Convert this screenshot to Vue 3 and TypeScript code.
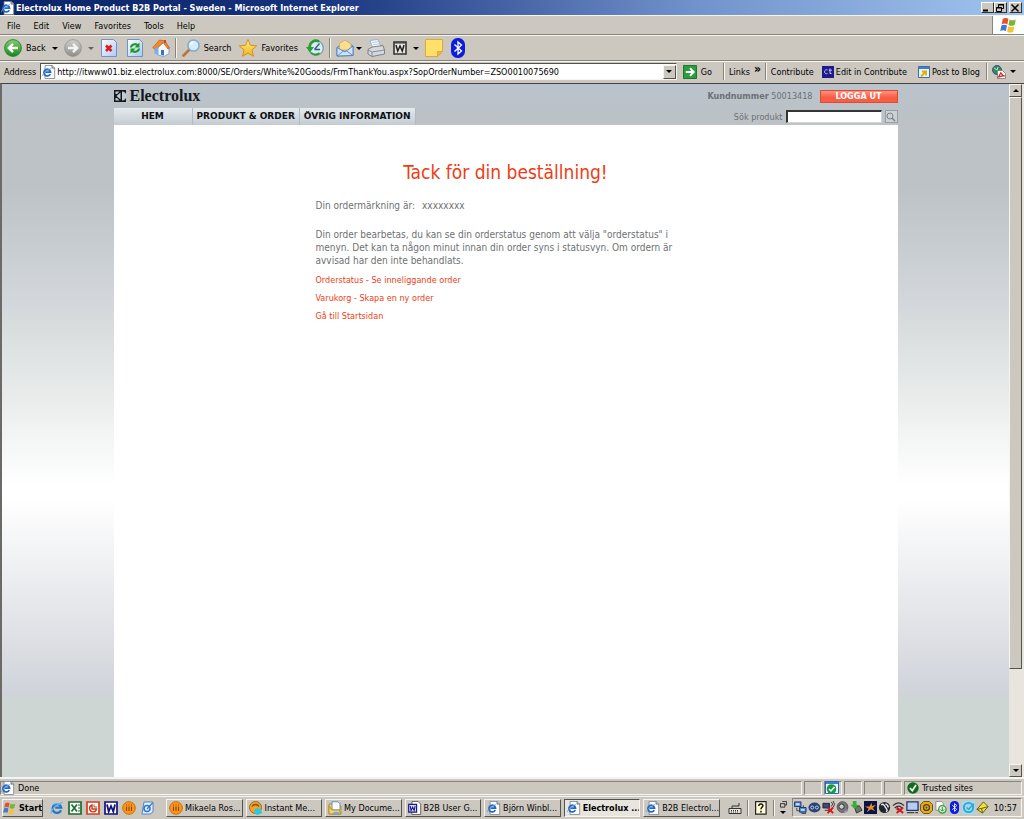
<script setup lang="ts">
import { ref } from 'vue'

interface TaskItem {
  icon: string
  label: string
  active?: boolean
}

const address = ref(
  'http://itwww01.biz.electrolux.com:8000/SE/Orders/White%20Goods/FrmThankYou.aspx?SopOrderNumber=ZSO0010075690',
)
const query = ref('')

const menus = ['File', 'Edit', 'View', 'Favorites', 'Tools', 'Help']

const nav = ['HEM', 'PRODUKT & ORDER', 'ÖVRIG INFORMATION']

const actions = [
  'Orderstatus - Se inneliggande order',
  'Varukorg - Skapa en ny order',
  'Gå till Startsidan',
]

const quickLaunch = ['ie', 'excel', 'powerpoint', 'word', 'orange', 'outlook']

const tasks: TaskItem[] = [
  { icon: 'orange', label: 'Mikaela Ros...' },
  { icon: 'messenger', label: 'Instant Me...' },
  { icon: 'folder', label: 'My Docume...' },
  { icon: 'worddoc', label: 'B2B User G...' },
  { icon: 'page', label: 'Björn Winbl...' },
  { icon: 'page', label: 'Electrolux ...', active: true },
  { icon: 'page', label: 'B2B Electrol...' },
]

const tray = [
  'network', 'cisco', 'offline', 'speaker', 'eject', 'star-dark', 'phone',
  'nowifi', 'monitor', 'lotus', 'sync', 'bluetooth', 'quicktime', 'tag',
]
</script>

<template>
  <div class="screen">
    <svg class="sprite" aria-hidden="true">
      <defs>
        <linearGradient id="g-green" x1="0" y1="0" x2="0" y2="1">
          <stop offset="0" stop-color="#7fd06c" /><stop offset="1" stop-color="#178a1c" />
        </linearGradient>
        <linearGradient id="g-grey" x1="0" y1="0" x2="0" y2="1">
          <stop offset="0" stop-color="#cfcfcd" /><stop offset="1" stop-color="#8d8d8b" />
        </linearGradient>
        <linearGradient id="g-sheet" x1="0" y1="0" x2="1" y2="1">
          <stop offset="0" stop-color="#ffffff" /><stop offset="1" stop-color="#a9c8f5" />
        </linearGradient>
        <linearGradient id="g-gold" x1="0" y1="0" x2="0" y2="1">
          <stop offset="0" stop-color="#fff07a" /><stop offset="1" stop-color="#f5b21c" />
        </linearGradient>
      </defs>
      <symbol id="i-ie" viewBox="0 0 16 16">
        <path d="M12.6 10.6a5 5 0 1 1 .3-3H6" fill="none" stroke="#1f78cc" stroke-width="2.6" />
        <path d="M1.5 14.5C0 12 6 4 14.500 1.500" fill="none" stroke="#63b5ee" stroke-width="1.300" />
        <path d="M4 4.600a5 5 0 0 1 7-.4" fill="none" stroke="#7cc4f5" stroke-width="1" />
      </symbol>
      <symbol id="i-page" viewBox="0 0 16 16">
        <path d="M3.500.5h8l3 3v12h-11z" fill="#fff" stroke="#7c8794" />
        <path d="M11.500.5v3h3" fill="#d5dde8" stroke="#55606d" />
        <path d="M9.400 10.300a3.800 3.800 0 1 1 .3-2.300H4" fill="none" stroke="#2267c9" stroke-width="2" />
        <path d="M.8 12.800C0 11 4 6 10.500 4" fill="none" stroke="#59a5ec" />
      </symbol>
      <symbol id="i-back" viewBox="0 0 18 18">
        <circle cx="9" cy="9" r="8.400" fill="url(#g-green)" stroke="#1c7a20" stroke-width=".8" />
        <path d="M14 9H5.500M9 4.800 4.800 9 9 13.200" fill="none" stroke="#fff" stroke-width="2.400" />
      </symbol>
      <symbol id="i-forward" viewBox="0 0 18 18">
        <circle cx="9" cy="9" r="8.400" fill="url(#g-grey)" stroke="#929290" stroke-width=".8" />
        <path d="M4 9h8.500M9 4.800 13.200 9 9 13.200" fill="none" stroke="#f4f4f2" stroke-width="2.400" />
      </symbol>
      <symbol id="i-stop" viewBox="0 0 18 18">
        <path d="M1.500.5h12l3 3v14h-15z" fill="url(#g-sheet)" stroke="#6d93c9" />
        <path d="M6 6.500l5.500 5.500M11.500 6.500 6 12" stroke="#e01c1c" stroke-width="2.600" />
      </symbol>
      <symbol id="i-refresh" viewBox="0 0 18 18">
        <path d="M1.500.5h12l3 3v14h-15z" fill="url(#g-sheet)" stroke="#6d93c9" />
        <path d="M5 8.500c.3-3 4.500-4.500 7-2M13 9.500c-.3 3-4.500 4.500-7 2" fill="none" stroke="#1d9a28" stroke-width="2.200" />
        <path d="M13.500 3.500v5h-5zM4.500 14.500v-5h5z" fill="#1d9a28" />
      </symbol>
      <symbol id="i-home" viewBox="0 0 18 18">
        <path d="M6 8v8l6 1.500 5-3V8l-5-5z" fill="#f4f8ff" stroke="#6f97cf" stroke-width=".8" />
        <path d="M.8 8.500 7.500 1 13 2l4.500 7-1.500 1-5-6.500L3.500 11z" fill="#f08a2a" stroke="#b95a10" stroke-width=".7" />
        <path d="M2.500 10v4.500L6 16V8z" fill="#7caee9" />
        <path d="M12 1h2v3h-2z" fill="#c8492b" />
        <path d="M9 11h3v5.500l-3-.7z" fill="#3f72bd" />
      </symbol>
      <symbol id="i-search" viewBox="0 0 18 18">
        <path d="M8 10 1.500 16.500" stroke="#b7773f" stroke-width="2.800" stroke-linecap="round" />
        <circle cx="11.500" cy="6.500" r="5.600" fill="#d5ecfd" stroke="#7fa8d4" stroke-width="1.500" />
        <path d="M8.500 6a3 3 0 0 1 3-2.700" fill="none" stroke="#fff" stroke-width="1.500" />
      </symbol>
      <symbol id="i-star" viewBox="0 0 18 18">
        <path d="M9 .5l2.400 5.800 6.300.5-4.700 4.100 1.500 6.400L9 14 3.500 17.300 5 10.900.3 6.800l6.300-.5z" fill="url(#g-gold)" stroke="#d48a12" stroke-width=".9" />
      </symbol>
      <symbol id="i-history" viewBox="0 0 18 18">
        <circle cx="10" cy="9" r="7.300" fill="#d8ecf3" stroke="#7c9aa3" stroke-width="1.200" />
        <path d="M8.500 10.500 13.500 4.500M8.500 10.500H14" fill="none" stroke="#2b5f7a" stroke-width="1.300" />
        <path d="M13 2.500C8 0 3.500 4 3.700 8.500" fill="none" stroke="#2c9c37" stroke-width="2.600" />
        <path d="M0 8h8L4 13.500z" fill="#2c9c37" />
        <path d="M5 13.500c2 2.500 6 2.800 8.500.5" fill="none" stroke="#2c9c37" stroke-width="2" />
      </symbol>
      <symbol id="i-mail" viewBox="0 0 18 18">
        <path d="M1 8.500 9 1.500l8 5.500v9.500L1 17z" fill="#9cc4f1" stroke="#4f7fbe" stroke-width=".9" />
        <path d="M3.500 4.500 9 1l6 4v6H3.500z" fill="#fddf8e" stroke="#d2a24b" stroke-width=".7" />
        <path d="M1 8.500 9 13l8-6v9.500L1 17z" fill="#cfe3fb" stroke="#4f7fbe" stroke-width=".9" />
        <path d="M1 17l6.500-5M17 16.500 10.500 12" stroke="#4f7fbe" stroke-width=".8" />
      </symbol>
      <symbol id="i-print" viewBox="0 0 18 18">
        <path d="M3 1.500 11 .5l3 7.500-8 2z" fill="#f7fbff" stroke="#8ea9ca" stroke-width=".8" />
        <path d="M5 3.500l6-.8M6 5.700l6-.8" stroke="#9ab3d3" stroke-width=".7" />
        <path d="M1 10.500 5 8l11-1.500 1.500 4.500v4L5 17.500 1 15z" fill="#d6d9dd" stroke="#6f7780" stroke-width=".9" />
        <path d="M1 11l4 2 12.500-2M5 13v4" fill="none" stroke="#737c86" stroke-width=".8" />
      </symbol>
      <symbol id="i-w" viewBox="0 0 14 14">
        <path d="M1 1h12v12H1z" fill="#e9e6dd" stroke="#333" stroke-width="1.600" />
        <path d="M3 4l1.700 6L7 5l2.300 5L11 4" fill="none" stroke="#222" stroke-width="1.500" />
        <path d="M1 2h12" stroke="#333" />
      </symbol>
      <symbol id="i-note" viewBox="0 0 18 18">
        <path d="M.5.500h17v12l-5 5H.5z" fill="#ffe169" stroke="#dba93a" />
        <path d="M17.500 12.500h-5v5z" fill="#f4b53f" stroke="#dba93a" />
      </symbol>
      <symbol id="i-bluetooth" viewBox="0 0 14 20">
        <rect x="0" y="0" width="14" height="20" rx="6.500" fill="#0a1ee0" />
        <path d="M3.500 6.500l7 6.500L7 16V4l3.500 3-7 6.500" fill="none" stroke="#fff" stroke-width="1.300" />
      </symbol>
      <symbol id="i-go" viewBox="0 0 15 15">
        <path d="M.5.500h14v14H.5z" fill="#2c9d3f" stroke="#167026" />
        <path d="M3 7.500h8M7.500 3.500l4 4-4 4" fill="none" stroke="#fff" stroke-width="2" />
      </symbol>
      <symbol id="i-contribute" viewBox="0 0 12 12">
        <path d="M0 0h12v12H0z" fill="#1d1a8c" />
        <path d="M5.500 4a2 2 0 1 0 0 3.500M8 2.500v5h1.500M6.800 4.200h3" fill="none" stroke="#c9ccff" />
      </symbol>
      <symbol id="i-post" viewBox="0 0 12 12">
        <path d="M.5.500h11v11H.5z" fill="#eaf3fc" stroke="#3e6ea8" />
        <path d="M1 1h10v2H1z" fill="#3d7fd0" />
        <path d="M3 10.500 7.500 6M4 5.500h4V9.500" fill="none" stroke="#e0b000" stroke-width="1.800" />
      </symbol>
      <symbol id="i-convert" viewBox="0 0 14 14">
        <circle cx="5" cy="5" r="4.500" fill="#2f8b55" stroke="#3a4f9a" />
        <path d="M2 3l3 2 1-3" stroke="#c8e6c0" fill="none" />
        <path d="M5.500 5.500h5l3 3v5h-8z" fill="#fff" stroke="#777" stroke-width=".8" />
        <path d="M6.500 12c2-3 2-5 2.500-4s2 3 4 3c-3-.3-5 .5-6.500 1z" fill="none" stroke="#d62419" stroke-width="1.200" />
      </symbol>
      <symbol id="i-windows" viewBox="0 0 16 16">
        <path d="M2.500 2.500q2.500-1.500 5 0L6.500 7.500q-2.500-1.500-5 0z" fill="#e8502a" />
        <path d="M8.500 3q2.500 1.500 5.500 0L13 8q-3 1.500-5.500 0z" fill="#74b63a" />
        <path d="M1.200 8.500q2.500-1.500 5 0L5.200 13.500q-2.500-1.500-5 0z" fill="#3f78d8" />
        <path d="M7.300 9q2.500 1.500 5.500 0l-1 5q-3 1.500-5.500 0z" fill="#f6c22d" />
      </symbol>
      <symbol id="i-excel" viewBox="0 0 14 14">
        <path d="M1 1h12v12H1z" fill="#fff" stroke="#1c6b30" stroke-width="1.700" />
        <path d="M3.500 3.500 9 10.500M9 3.500 3.500 10.500" stroke="#1c6b30" stroke-width="1.700" />
        <path d="M10 4h2M10 7h2M10 10h2" stroke="#1c6b30" />
      </symbol>
      <symbol id="i-powerpoint" viewBox="0 0 14 14">
        <path d="M1 1h12v12H1z" fill="#fff" stroke="#cf3f22" stroke-width="1.700" />
        <path d="M6 4a3.500 3.500 0 1 0 4.500 4H6z" fill="none" stroke="#cf3f22" stroke-width="1.400" />
        <path d="M8 3.500v2.500h3" fill="none" stroke="#cf3f22" />
      </symbol>
      <symbol id="i-word" viewBox="0 0 14 14">
        <path d="M1 1h12v12H1z" fill="#fff" stroke="#12127f" stroke-width="1.700" />
        <path d="M3 3.500l1.700 7L7 5l2.300 5.500L11 3.500" fill="none" stroke="#12127f" stroke-width="1.800" />
      </symbol>
      <symbol id="i-worddoc" viewBox="0 0 16 16">
        <path d="M4.500.5h7l3 3v12h-10z" fill="#fff" stroke="#555" />
        <path d="M.8 3.800h9v9h-9z" fill="#dfe4ff" stroke="#1a1a8c" stroke-width="1.400" />
        <path d="M2.500 5.500l1 5.500 1.800-4 1.800 4 1-5.500" fill="none" stroke="#1a1a8c" stroke-width="1.200" />
      </symbol>
      <symbol id="i-orange" viewBox="0 0 14 14">
        <circle cx="7" cy="7" r="6.300" fill="#f59a16" stroke="#c96b08" />
        <path d="M4.500 5.500V10M7 5.500V10M9.500 5.500V10M4 4h1M6.500 4h1M9 4h1" stroke="#b23c0c" stroke-width="1.200" />
      </symbol>
      <symbol id="i-outlook" viewBox="0 0 14 14">
        <path d="M4 1h9v10l-3 2H2z" fill="#e6f2ff" stroke="#4b86c9" />
        <circle cx="7" cy="7.500" r="3" fill="none" stroke="#2c78d3" stroke-width="1.600" />
        <path d="M12.500 2 7 8" stroke="#2c78d3" stroke-width="1.200" />
      </symbol>
      <symbol id="i-messenger" viewBox="0 0 14 14">
        <circle cx="6.500" cy="6.500" r="6" fill="#f3a32a" stroke="#a9631a" />
        <path d="M3 5.500a4 4 0 0 1 7 0" fill="none" stroke="#7d5220" stroke-width="1.400" />
        <path d="M5 9l3-2 4 1 1 4-4 2-3-1z" fill="#2cc9d8" />
      </symbol>
      <symbol id="i-folder" viewBox="0 0 14 14">
        <path d="M1 3h5l1 2h6v8H1z" fill="#f5d568" stroke="#b98f25" />
        <path d="M4 .8h6l2 2V9H4z" fill="#fff" stroke="#5f8cc7" />
        <path d="M1 5v8h12l-2-4H4z" fill="#f5d568" stroke="#b98f25" />
        <path d="M4 13c2-3 6-3 9 0z" fill="#6fa9e8" />
      </symbol>
      <symbol id="i-keyboard" viewBox="0 0 14 14">
        <path d="M1 7.500h12v5H1z" fill="#e8e5dc" stroke="#333" />
        <path d="M3 9.500h8M3 11h8" stroke="#333" stroke-dasharray="1 1" />
        <path d="M4 7V5h7V2" fill="none" stroke="#333" />
      </symbol>
      <symbol id="i-help" viewBox="0 0 12 14">
        <path d="M.6.600h10.500v12.500H.6z" fill="#fffbd2" stroke="#222" stroke-width="1.200" />
        <path d="M3.800 5c0-3 4.500-2.500 4 0C7.500 6.300 6 6.300 6 8.300M6 9.800v1.600" fill="none" stroke="#111" stroke-width="1.500" />
      </symbol>
      <symbol id="i-restore" viewBox="0 0 8 8">
        <path d="M2.500.5h5v4h-2M.5 3h5v4h-5z" fill="none" stroke="#222" />
      </symbol>
      <symbol id="i-globe-check" viewBox="0 0 14 14">
        <path d="M.5.500h13v12H.5z" fill="#eef6ff" stroke="#2f68b5" />
        <path d="M1 1h12v2H1z" fill="#3f80d0" />
        <circle cx="6.500" cy="8" r="4.800" fill="#169a45" />
        <path d="M4 8l2 2 3.500-4" fill="none" stroke="#fff" stroke-width="1.500" />
      </symbol>
      <symbol id="i-trusted" viewBox="0 0 12 12">
        <circle cx="6" cy="6" r="5.700" fill="#126b1d" />
        <path d="M3 6l2.300 2.700L9 3" fill="none" stroke="#fff" stroke-width="1.700" />
      </symbol>
      <symbol id="i-network" viewBox="0 0 14 14">
        <path d="M.5 1h7v5h-7zM6 7h7v5H6z" fill="#4b93ea" stroke="#1b2f66" />
        <path d="M2 2.500h4v2H2zM7.500 8.500h4v2h-4z" fill="#c6e2ff" />
        <path d="M3 7.500v3h3M10 4.500v2M8 13.500h5" stroke="#444" fill="none" />
      </symbol>
      <symbol id="i-cisco" viewBox="0 0 14 14">
        <ellipse cx="7" cy="7" rx="6.500" ry="5.500" fill="#2c4274" />
        <circle cx="4.500" cy="7" r="1.600" fill="none" stroke="#c9d5ee" /><circle cx="9.500" cy="7" r="1.600" fill="none" stroke="#c9d5ee" />
      </symbol>
      <symbol id="i-offline" viewBox="0 0 14 14">
        <path d="M1 2.500h7v5H1z" fill="#334a87" stroke="#222" /><path d="M3 10h6M10 1q3 2 0 5M12 0q3 3.500 0 7" fill="none" stroke="#333" />
        <path d="M6 7l6 6M12 7l-6 6" stroke="#d8131d" stroke-width="2" />
      </symbol>
      <symbol id="i-speaker" viewBox="0 0 14 14">
        <circle cx="7" cy="6.500" r="5.800" fill="#777" stroke="#555" /><circle cx="6" cy="6" r="2.800" fill="#ccc" stroke="#333" />
        <path d="M9 12l4-2" stroke="#a58ac8" stroke-width="2" />
      </symbol>
      <symbol id="i-eject" viewBox="0 0 14 14">
        <path d="M5 7l5-2 3 5-6 3z" fill="#6b7768" stroke="#333" /><path d="M3 0h4v4h2.500L5 8.500.5 4H3z" fill="#2fb43a" />
      </symbol>
      <symbol id="i-star-dark" viewBox="0 0 14 14">
        <path d="M0 0h14v14H0z" fill="#0b1245" /><path d="M8 2l.8 3.500L13 4 9.500 7.500 12 11 7.500 9 3 12l2-4-4-2h5z" fill="#e88b28" />
      </symbol>
      <symbol id="i-phone" viewBox="0 0 14 14">
        <circle cx="7" cy="7" r="6" fill="#20242c" /><path d="M3.500 4.500q1.500-2 3 0L9.500 9q1 2-1 2.500M8 3q3 1 3 4" fill="none" stroke="#e5ebf5" stroke-width="1.500" />
      </symbol>
      <symbol id="i-nowifi" viewBox="0 0 14 14">
        <path d="M1 5q6-6 12 0M3 7.500q4-4 8 0M5 9.800q2-2 4 0" fill="none" stroke="#333" stroke-width="1.300" />
        <path d="M5 7l7 6M12 7l-7 6" stroke="#d8131d" stroke-width="2" />
      </symbol>
      <symbol id="i-monitor" viewBox="0 0 14 14">
        <path d="M1 1h12v9H1z" fill="#b7cdf2" stroke="#26346b" stroke-width="1.400" /><path d="M1 12.500h8M10 12.500h3" stroke="#444" stroke-width="1.500" />
      </symbol>
      <symbol id="i-lotus" viewBox="0 0 14 14">
        <path d="M4 .5h6L13.500 4v6L10 13.500H4L.5 10V4z" fill="#e4ad1b" stroke="#64480a" />
        <circle cx="7" cy="7" r="3.200" fill="none" stroke="#54400f" stroke-width="1.400" /><circle cx="7" cy="7" r="1" fill="#54400f" />
      </symbol>
      <symbol id="i-sync" viewBox="0 0 14 14">
        <path d="M2 .5h6l2 2V10H2z" fill="#fff" stroke="#888" /><circle cx="9" cy="9" r="4" fill="#dff2dd" stroke="#39a13f" stroke-width="1.400" />
        <path d="M9 6.500v4M7 9l2 2 2-2" fill="none" stroke="#2b8a30" />
      </symbol>
      <symbol id="i-quicktime" viewBox="0 0 14 14">
        <path d="M0 0h14v14H0z" fill="#9bdcf2" /><circle cx="7" cy="7" r="5" fill="none" stroke="#2fa3dd" stroke-width="2" />
        <path d="M5 7l2 2 6-6" fill="none" stroke="#2fa3dd" stroke-width="1.500" />
      </symbol>
      <symbol id="i-tag" viewBox="0 0 14 14">
        <path d="M1 9 8 1l5 5-6 7z" fill="#f1e13c" stroke="#5c5510" /><path d="M1 9l5-1 7-2M6 8l1 5" fill="none" stroke="#5c5510" />
      </symbol>
      <symbol id="i-logo" viewBox="0 0 12 12">
        <path d="M0 0h12v12H0z" fill="#15181b" />
        <path d="M1.500 1.500h4L3 4H1.500zM1.500 10.500h4L3 8H1.500zM2.500 6l4-3.500v7z" fill="#c4cbd0" />
        <path d="M8 1.500a4.500 4.500 0 0 1 0 9z" fill="#c4cbd0" />
      </symbol>
      <symbol id="i-lens" viewBox="0 0 10 10">
        <circle cx="4" cy="4" r="3" fill="none" stroke="#7a8084" /><path d="M6 6l3 3" stroke="#7a8084" stroke-width="1.400" />
      </symbol>
    </svg>

    <header class="titlebar">
      <svg class="i14"><use href="#i-page" /></svg>
      <h1>Electrolux Home Product B2B Portal - Sweden - Microsoft Internet Explorer</h1>
      <div class="winbuttons">
        <button type="button" aria-label="Minimize"><svg viewBox="0 0 10 8"><path d="M1 6.500h5" stroke="#000" stroke-width="2" /></svg></button>
        <button type="button" aria-label="Restore"><svg viewBox="0 0 10 8"><path d="M3.500 3V.5h5v4h-2M3 1h6M1.500 3.500h5v4h-5zM1 4h6" fill="none" stroke="#000" /></svg></button>
        <button type="button" class="close" aria-label="Close"><svg viewBox="0 0 10 8"><path d="M1.500.5l7 7M8.500.5l-7 7" stroke="#000" stroke-width="1.500" /></svg></button>
      </div>
    </header>

    <div class="menurow">
      <nav class="menus">
        <button v-for="m in menus" :key="m" type="button">{{ m }}</button>
      </nav>
      <div class="throbber"><svg class="i18"><use href="#i-windows" /></svg></div>
    </div>

    <div class="toolbar">
      <button type="button"><svg class="i18"><use href="#i-back" /></svg><span>Back</span></button>
      <button type="button" class="arrow" aria-label="Back history"><i class="caret"></i></button>
      <button type="button" aria-label="Forward"><svg class="i18"><use href="#i-forward" /></svg></button>
      <button type="button" class="arrow dim" aria-label="Forward history"><i class="caret"></i></button>
      <button type="button" aria-label="Stop"><svg class="i18"><use href="#i-stop" /></svg></button>
      <button type="button" aria-label="Refresh" class="gap"><svg class="i18"><use href="#i-refresh" /></svg></button>
      <button type="button" aria-label="Home" class="gap"><svg class="i18"><use href="#i-home" /></svg></button>
      <i class="divider"></i>
      <button type="button"><svg class="i18"><use href="#i-search" /></svg><span>Search</span></button>
      <button type="button" class="gap"><svg class="i18"><use href="#i-star" /></svg><span>Favorites</span></button>
      <button type="button" aria-label="History" class="gap"><svg class="i18"><use href="#i-history" /></svg></button>
      <i class="divider"></i>
      <button type="button" aria-label="Mail"><svg class="i18"><use href="#i-mail" /></svg><i class="caret tight"></i></button>
      <button type="button" aria-label="Print"><svg class="i18"><use href="#i-print" /></svg></button>
      <button type="button" aria-label="Edit with Word" class="gap"><svg class="i14"><use href="#i-w" /></svg></button>
      <button type="button" class="arrow" aria-label="Editors"><i class="caret"></i></button>
      <button type="button" aria-label="Discuss"><svg class="i18"><use href="#i-note" /></svg></button>
      <button type="button" aria-label="Bluetooth" class="gap"><svg class="tall"><use href="#i-bluetooth" /></svg></button>
    </div>

    <div class="addressrow">
      <label for="address">Address</label>
      <div class="combo">
        <svg class="i14"><use href="#i-page" /></svg>
        <input id="address" v-model="address" type="text" spellcheck="false" />
        <button type="button" class="raised" aria-label="Show addresses"><i class="caret"></i></button>
      </div>
      <button type="button" class="go"><svg class="i14"><use href="#i-go" /></svg><span>Go</span></button>
      <i class="divider"></i>
      <button type="button" class="links">Links <b>»</b></button>
      <i class="divider"></i>
      <button type="button">Contribute</button>
      <button type="button" class="contrib"><svg class="i12"><use href="#i-contribute" /></svg><span>Edit in Contribute</span></button>
      <button type="button" class="post"><svg class="i12"><use href="#i-post" /></svg><span>Post to Blog</span></button>
      <i class="divider"></i>
      <button type="button" class="convert" aria-label="Convert"><svg class="i14"><use href="#i-convert" /></svg><i class="caret"></i></button>
    </div>

    <div class="viewport">
      <div class="page">
        <div class="site">
          <div class="brandrow">
            <a href="#" class="brand"><svg class="i12"><use href="#i-logo" /></svg><span>Electrolux</span></a>
            <div class="account">
              <span><b>Kundnummer</b> 50013418</span>
              <button type="button" class="logout">LOGGA UT</button>
            </div>
          </div>
          <div class="navrow">
            <nav class="sitenav">
              <a v-for="n in nav" :key="n" href="#">{{ n }}</a>
            </nav>
            <form class="find" @submit.prevent>
              <label for="product">Sök produkt</label>
              <input id="product" v-model="query" type="text" />
              <button type="submit" aria-label="Sök"><svg><use href="#i-lens" /></svg></button>
            </form>
          </div>
          <main class="content">
            <h2>Tack för din beställning!</h2>
            <div class="copy">
              <p class="mark">Din ordermärkning är:<span>xxxxxxxx</span></p>
              <p>
                Din order bearbetas, du kan se din orderstatus genom att välja "orderstatus" i<br />
                menyn. Det kan ta någon minut innan din order syns i statusvyn. Om ordern är<br />
                avvisad har den inte behandlats.
              </p>
              <ul>
                <li v-for="a in actions" :key="a"><a href="#">{{ a }}</a></li>
              </ul>
            </div>
          </main>
        </div>
      </div>
      <div class="scrollbar">
        <button type="button" class="raised" aria-label="Scroll up"><i class="caret up"></i></button>
        <div class="thumb raised"></div>
        <div class="track"></div>
        <button type="button" class="raised" aria-label="Scroll down"><i class="caret"></i></button>
      </div>
    </div>

    <div class="statusbar">
      <div class="cell done"><svg class="i14"><use href="#i-page" /></svg><span>Done</span></div>
      <div class="cell"></div>
      <div class="cell"><svg class="i14"><use href="#i-globe-check" /></svg></div>
      <div class="cell"></div>
      <div class="cell"></div>
      <div class="cell"></div>
      <div class="cell zone"><svg class="i12"><use href="#i-trusted" /></svg><span>Trusted sites</span></div>
    </div>

    <footer class="taskbar">
      <button type="button" class="task start"><svg class="i14"><use href="#i-windows" /></svg><span>Start</span></button>
      <div class="quick">
        <button v-for="q in quickLaunch" :key="q" type="button" :aria-label="q"><svg class="i14"><use :href="'#i-' + q" /></svg></button>
      </div>
      <div class="tasks">
        <button v-for="t in tasks" :key="t.label" type="button" class="task" :class="{ active: t.active }">
          <svg class="i14"><use :href="'#i-' + t.icon" /></svg><span>{{ t.label }}</span>
        </button>
      </div>
      <div class="bands">
        <svg class="i14"><use href="#i-keyboard" /></svg>
        <i class="divider"></i>
        <svg class="i14"><use href="#i-help" /></svg>
        <i class="divider"></i>
        <div class="lang"><svg><use href="#i-restore" /></svg><i class="caret"></i></div>
      </div>
      <div class="tray">
        <svg v-for="t in tray" :key="t" class="i13"><use :href="'#i-' + t" /></svg>
        <time>10:57</time>
      </div>
    </footer>
  </div>
</template>

<style>
html,
body {
  height: 100%;
}
body {
  margin: 0;
  overflow: hidden;
}
</style>

<style scoped>
* {
  box-sizing: border-box;
}
.screen {
  --face: #ccc8c0;
  --light: #f6f4ef;
  --shade: #87847d;
  display: flex;
  flex-direction: column;
  height: 100vh;
  overflow: hidden;
  background: var(--face);
  color: #000;
  font: 9px/12px 'DejaVu Sans Condensed', 'DejaVu Sans', sans-serif;
  white-space: nowrap;
}
.sprite {
  position: absolute;
  width: 0;
  height: 0;
}
svg {
  flex: none;
  display: block;
}
button,
input {
  font: inherit;
  color: inherit;
  margin: 0;
  padding: 0;
  border: 0;
  border-radius: 0;
  background: none;
}
h1,
h2,
p,
ul {
  margin: 0;
  padding: 0;
}
.i12 { width: 12px; height: 12px; }
.i13 { width: 13px; height: 13px; }
.i14 { width: 14px; height: 14px; }
.i18 { width: 18px; height: 18px; }
.tall { width: 14px; height: 20px; }
.raised {
  background: var(--face);
  border: 1px solid;
  border-color: var(--light) #55534e #55534e var(--light);
}
.caret {
  display: block;
  flex: none;
  border: 3px solid transparent;
  border-top-color: #000;
  border-bottom-width: 0;
}
.caret.up {
  border-top-width: 0;
  border-bottom: 3px solid #000;
}
.divider {
  width: 2px;
  align-self: stretch;
  margin: 1px 0;
  border-left: 1px solid var(--shade);
  border-right: 1px solid var(--light);
}

.titlebar {
  display: flex;
  align-items: center;
  height: 15px;
  flex: none;
  padding: 0 2px 0 1px;
  gap: 1px;
  background: linear-gradient(90deg, #0b2468, #16327c 30%, #7193cc 68%, #a0c4ee);
  color: #fff;
}
.titlebar h1 {
  flex: 1;
  font-size: 9px;
  font-weight: bold;
}
.winbuttons {
  display: flex;
}
.winbuttons button {
  width: 13px;
  height: 11px;
  background: var(--face);
  border: 1px solid;
  border-color: #fff #333 #333 #fff;
}
.winbuttons svg {
  width: 10px;
  height: 8px;
}
.winbuttons .close {
  margin-left: 2px;
}

.menurow {
  display: flex;
  height: 20px;
  flex: none;
  border-top: 1px solid var(--light);
  border-bottom: 1px solid var(--shade);
}
.menus {
  display: flex;
  flex: 1;
  gap: 13px;
  padding: 1px 0 0 7px;
  align-items: center;
}
.throbber {
  width: 32px;
  background: #fff;
  border-left: 1px solid var(--shade);
  display: grid;
  place-items: center;
}

.toolbar {
  display: flex;
  align-items: center;
  height: 26px;
  flex: none;
  padding: 1px 4px;
  border-top: 1px solid var(--light);
  border-bottom: 1px solid var(--shade);
}
.toolbar button,
.addressrow > button {
  display: flex;
  align-items: center;
  gap: 4px;
}
.toolbar .arrow {
  padding: 0 6px;
}
.toolbar .gap {
  margin-left: 8px;
}
.toolbar .dim {
  opacity: 0.5;
}
.toolbar .divider {
  margin: 1px 5px 1px 5px;
}
.toolbar .tight {
  margin: 0 5px 0 -2px;
}

.addressrow {
  display: flex;
  align-items: center;
  height: 22px;
  flex: none;
  padding: 0 8px 2px 4px;
  border-top: 1px solid var(--light);
  gap: 4px;
}
.combo {
  display: flex;
  flex: 1;
  align-items: center;
  height: 17px;
  padding-left: 1px;
  gap: 1px;
  background: #fff;
  border: 1px solid;
  border-color: #55534e var(--light) var(--light) #55534e;
}
.combo input {
  flex: 1;
  min-width: 0;
  height: 15px;
  outline: 0;
}
.combo .raised {
  width: 13px;
  height: 14px;
  display: grid;
  place-items: center;
}
.addressrow .go { margin: 0 7px 0 2px; }
.addressrow .links b { font-size: 12px; margin-bottom: 6px; }
.addressrow .contrib,
.addressrow .post { gap: 2px; margin-left: 4px; }
.addressrow .post { margin: 0 2px 0 7px; }

.viewport {
  display: flex;
  flex: 1;
  min-height: 0;
  border-top: 1px solid #44433f;
  border-left: 2px solid #6b6a66;
}
.page {
  flex: 1;
  display: flex;
  justify-content: center;
  background: linear-gradient(
    #bac3cb,
    #bcc2c5 40px,
    #bcc2c5 15%,
    #d5d9de 33%,
    #d7dbdb 34%,
    #ffffff 58%,
    #ffffff 60%,
    #d0d3da 88%,
    #cdd6d3 89%
  );
}
.site {
  display: flex;
  flex-direction: column;
  width: 784px;
  max-width: 100%;
  color: #6d7174;
}
.brandrow,
.navrow {
  display: flex;
  justify-content: space-between;
  align-items: center;
}
.brandrow {
  height: 24px;
}
.brand {
  display: flex;
  align-items: center;
  gap: 4px;
  color: #15181b;
  text-decoration: none;
  font: bold 16px/18px 'Liberation Serif', serif;
}
.account {
  display: flex;
  align-items: center;
  gap: 7px;
}
.logout {
  width: 78px;
  height: 13px;
  color: #fff;
  font-weight: bold;
  line-height: 11px;
  background: linear-gradient(#ff9483, #fb5a41 60%, #f2604c);
  border: 1px solid #e2492f;
}
.navrow {
  height: 17px;
}
.sitenav {
  display: flex;
  align-self: stretch;
  background: linear-gradient(#e4eaed, #c3cbd2);
}
.sitenav a {
  min-width: 79px;
  padding: 0 4px;
  border-right: 1px solid #b3babf;
  color: #0d0f11;
  text-align: center;
  text-decoration: none;
  font: bold 9px/17px 'DejaVu Sans', sans-serif;
}
.find {
  display: flex;
  align-items: center;
  gap: 3px;
}
.find input {
  width: 96px;
  height: 13px;
  background: #fff;
  border: 1px solid;
  border-color: #333 #d5d5d5 #d5d5d5 #333;
  border-width: 2px 1px 1px 2px;
}
.find button {
  width: 13px;
  height: 13px;
  display: grid;
  place-items: center;
  background: #ccd1d4;
  border: 1px solid #989fa3;
}
.find svg {
  width: 10px;
  height: 10px;
}
.content {
  flex: 1;
  padding-top: 34px;
  background: #fff;
}
.content h2 {
  color: #f03c14;
  font: 19px/26px 'DejaVu Sans Condensed', 'DejaVu Sans', sans-serif;
  text-align: center;
}
.copy {
  width: 380px;
  margin: 14px auto 0;
  font-size: 10px;
  line-height: 13px;
}
.mark {
  margin-bottom: 16px;
}
.mark span {
  margin-left: 7px;
}
.copy ul {
  list-style: none;
  margin-top: 4px;
  font-size: 9px;
}
.copy li {
  line-height: 18px;
}
.copy a {
  color: #f03c14;
  text-decoration: none;
}

.scrollbar {
  display: flex;
  flex-direction: column;
  width: 15px;
  padding-right: 2px;
  background: #e8e5df;
}
.scrollbar button {
  height: 13px;
  display: grid;
  place-items: center;
}
.thumb {
  flex: 574;
}
.track {
  flex: 96;
}

.statusbar {
  display: flex;
  height: 19px;
  flex: none;
  padding: 2px 2px 1px 0;
  gap: 2px;
  border-top: 2px solid var(--light);
}
.cell {
  width: 18px;
  display: flex;
  align-items: center;
  gap: 3px;
  border: 1px solid;
  border-color: var(--shade) var(--light) var(--light) var(--shade);
}
.cell.done {
  flex: 1;
}
.cell.zone {
  width: 118px;
  padding-left: 2px;
}

.taskbar {
  display: flex;
  align-items: center;
  height: 23px;
  flex: none;
  padding: 1px 2px 2px;
  border-top: 1px solid var(--light);
}
.task {
  flex: 1 1 0;
  min-width: 0;
  overflow: hidden;
  display: flex;
  align-items: center;
  gap: 2px;
  height: 18px;
  padding-left: 2px;
  border: 1px solid;
  border-color: var(--light) #55534e #55534e var(--light);
}
.task.active {
  font-weight: bold;
  background: #e8e5df;
  border-color: #55534e var(--light) var(--light) #55534e;
}
.task.start {
  flex: none;
  padding: 0;
  font-weight: bold;
}
.quick {
  display: flex;
  gap: 4px;
  margin: 0 12px 0 7px;
}
.tasks {
  display: flex;
  flex: 1;
  gap: 3px;
  min-width: 0;
}
.bands {
  display: flex;
  align-items: center;
  gap: 5px;
  margin: 0 5px 0 8px;
}
.bands .divider {
  height: 16px;
}
.lang {
  display: grid;
  gap: 3px;
  justify-items: center;
}
.lang svg {
  width: 7px;
  height: 7px;
}
.tray {
  display: flex;
  align-items: center;
  height: 19px;
  gap: 1px;
  padding: 0 4px 0 1px;
  border: 1px solid;
  border-color: var(--shade) var(--light) var(--light) var(--shade);
}
.tray time {
  margin-left: 4px;
}
</style>
